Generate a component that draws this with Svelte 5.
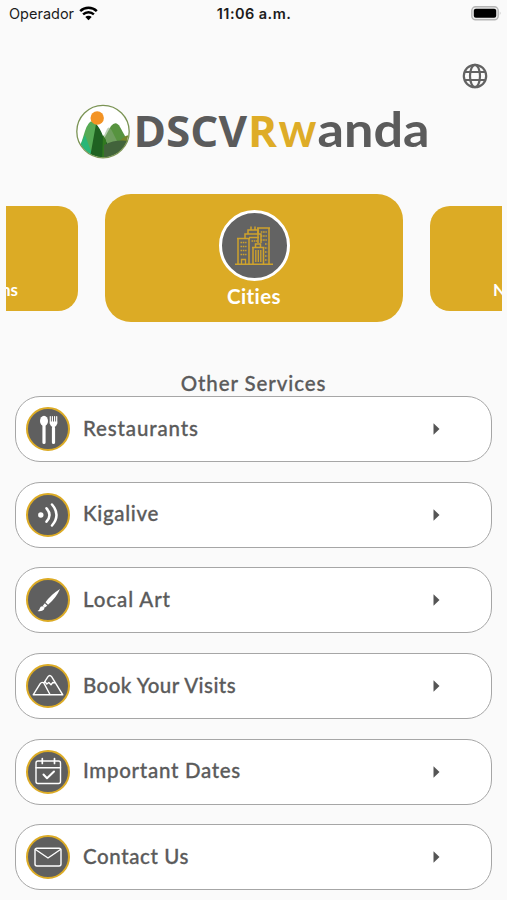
<script lang="ts">
	const services = [
		{ label: 'Restaurants', icon: 'cutlery', spacing: 0.85 },
		{ label: 'Kigalive', icon: 'live', spacing: 0.65 },
		{ label: 'Local Art', icon: 'brush', spacing: 0.9 },
		{ label: 'Book Your Visits', icon: 'mountain', spacing: 0.45 },
		{ label: 'Important Dates', icon: 'calendar', spacing: 0.7 },
		{ label: 'Contact Us', icon: 'mail', spacing: 0.6 }
	];
</script>

<div class="screen">
	<header class="status-bar">
		<div class="carrier">
			<span>Operador</span>
			<svg width="19" height="15" viewBox="0 0 19 15">
				<path d="M1.2 5.2a12 12 0 0 1 16.6 0" fill="none" stroke="#000" stroke-width="2.5" />
				<path d="M4.1 8.4a7.8 7.8 0 0 1 10.8 0" fill="none" stroke="#000" stroke-width="2.4" />
				<path d="M6.3 11a4.6 4.6 0 0 1 6.4 0l-3.2 3.3z" fill="#000" />
			</svg>
		</div>
		<span class="time">11:06 a.m.</span>
		<svg class="battery" width="31" height="15" viewBox="0 0 31 15">
			<rect x="0.8" y="0.8" width="26.4" height="13" rx="3.8" fill="#ececec" stroke="#b5b5b5" stroke-width="1.4" />
			<rect x="2.8" y="2.8" width="22.4" height="9" rx="2" fill="#000" />
			<path d="M28.8 5.2q1.8 2.1 0 4.4z" fill="#b5b5b5" />
		</svg>
	</header>

	<div class="toolbar">
		<button class="language" aria-label="Language">
			<svg width="26" height="26" viewBox="0 0 26 26" fill="none" stroke="#626262" stroke-width="2.2">
				<circle cx="13" cy="13" r="11.2" />
				<ellipse cx="13" cy="13" rx="5" ry="11.2" />
				<path d="M2.8 9h20.4M2.8 17h20.4" />
			</svg>
		</button>
	</div>

	<div class="brand">
		<svg width="356" height="60" viewBox="0 0 356 60">
			<defs>
				<clipPath id="badge"><circle cx="27" cy="29.6" r="25.6" /></clipPath>
			</defs>
			<circle cx="27" cy="29.6" r="26.2" fill="#fff" />
			<g clip-path="url(#badge)">
				<path d="M24 44L35 24q5-6 9 1l11 20v15H24z" fill="#57933f" />
				<path d="M38 46q14-20 22-9v21H35z" fill="#75862a" />
				<path d="M24 42L31 27q2-4 5 2l8 16v15H24z" fill="#83a878" opacity="0.55" />
				<path d="M0 58L9 29q6-17 13-4L31 60z" fill="#56aa55" />
				<path d="M0 52L9 33 19 60H0z" fill="#29b678" />
				<path d="M20 22q4 4 7 12l4 7v20H13z" fill="#1f6221" />
				<path d="M27 33l3 5v22h-4z" fill="#31791f" />
				<path d="M28 43q14-7 28-3v20H28z" fill="#42633b" />
			</g>
			<circle cx="21.2" cy="16" r="6.7" fill="#f39324" />
			<circle cx="27" cy="29.6" r="26.2" fill="none" stroke="#7b9455" stroke-width="1.3" />
			<text class="wordmark" x="57.5" y="44.9" fill="#5b5b5b" textLength="113.5" lengthAdjust="spacingAndGlyphs">DSCV</text>
			<text class="wordmark" x="172" y="44.9" fill="#deac27" textLength="29" lengthAdjust="spacingAndGlyphs">R</text>
			<text class="soft" x="202.5" y="44.7" fill="#deac27" textLength="38" lengthAdjust="spacingAndGlyphs">w</text>
			<text class="soft" x="241.5" y="44.7" fill="#5b5b5b" textLength="112" lengthAdjust="spacingAndGlyphs">anda</text>
		</svg>
	</div>

	<div class="carousel">
		<div class="card side left"><span>ns</span></div>
		<div class="card main">
			<div class="card-icon">
				<svg width="38" height="41" viewBox="0 0 38 41" fill="none" stroke="#cfa32c" stroke-width="1.5">
					<path d="M0 39.3h38M3 39V13.5h11V39M2 13.5h13M10 13V9h3V5h3V1.5M20 1.5V5h3v4h3v9M13 5h10M10 9h14M14 12.5h10" />
					<path d="M23 18V3h11v36M22 3h13M18 39V22.5h10.5V39M17 22.5h12.5M20.5 22V19h5v3" />
					<path d="M5.5 17.5h6M5.5 21.5h6M5.5 25.5h6M5.5 29.5h6M16.5 16h6" stroke-dasharray="1.6 0.7" />
					<path d="M25.8 7h6M25.8 11h6M25.8 15h6M30 19h2.5M30 23h2.5M30 27h2.5M30 31h2.5M30 35h2.5" stroke-dasharray="1.6 0.7" />
					<path d="M20.8 25v12M23.3 25v12M25.8 25v12M6.5 39v-4.5h4V39" stroke-width="1.3" />
				</svg>
			</div>
			<span>Cities</span>
		</div>
		<div class="card side right"><span>N</span></div>
	</div>

	<h2>Other Services</h2>

	<div class="services">
		{#each services as service}
			<button class="service">
				<span class="service-icon">
					<svg width="40" height="40" viewBox="0 0 40 40" fill="none" stroke="#fff" stroke-width="1.4" stroke-linecap="round" stroke-linejoin="round">
						{#if service.icon === 'cutlery'}
							<ellipse cx="16" cy="11.9" rx="4" ry="5.2" fill="#fff" stroke="none" />
							<path d="M16 17v16.5M25.5 19v14.5" stroke-width="3.2" />
							<path d="M16 16v6M25.5 17v6" stroke-width="1.8" />
							<path d="M22.3 7.5v7M24.4 7.5v7M26.6 7.5v7M28.7 7.5v7" stroke-width="1.2" />
							<path d="M21.8 12.5h7.400q0 4.500-2.700 5.500h-2q-2.700-1-2.700-5.500z" fill="#fff" stroke="none" />
						{:else if service.icon === 'live'}
							<circle cx="12.8" cy="20" r="2.7" fill="#fff" stroke="none" />
							<path d="M18.5 13.3q6 6.700 0 13.400M24 9.500q9 10.500 0 21" stroke-width="2.5" />
						{:else if service.icon === 'brush'}
							<path d="M32 9Q28.500 17.500 20 24.800l-2.500-2.500Q23 14.500 32 9z" fill="#fff" stroke="none" />
							<path d="M16.800 23.200l2.500 2.500-2.800 2-1.800-1.800z" fill="#fff" stroke="none" />
							<path d="M14.300 26.300q3 .7 1.700 3.200-2 2.300-6.500 1.500 2-.8 2.300-2.800.6-2 2.500-1.900z" fill="#fff" stroke="none" />
						{:else if service.icon === 'mountain'}
							<path d="M21 28.800H5.200L12.200 17.700q2-2.700 4 0l5.800 10.800M15.800 17.200L20 10.700q1.800-2.500 3.600 0L34.800 28.800H21" />
							<path d="M17 15.800l1.800 2.200 2-1.500 2.200 2.200 1.800-2.200 1.700.3" />
						{:else if service.icon === 'calendar'}
							<rect x="8" y="9" width="24.500" height="22.500" rx="2" />
							<path d="M8 15.800h24.500" />
							<path d="M14.300 6.500v5M26.500 6.500v5" stroke-width="1.700" />
							<path d="M15.500 22.500l3.500 3.800 7-6.800" stroke-width="2" />
						{:else}
							<rect x="7" y="11.300" width="26" height="17.700" rx="2" />
							<path d="M7.500 12.500L20 21l12.500-8.500" />
						{/if}
					</svg>
				</span>
				<span class="label" style="letter-spacing: {service.spacing}px">{service.label}</span>
				<svg class="arrow" width="7" height="12" viewBox="0 0 7 12">
					<path d="M0.500 0.300L6.500 6 0.500 11.700z" fill="#555" />
				</svg>
			</button>
		{/each}
	</div>
</div>

<style>
	:global(body) {
		margin: 0;
		background: #fafafa;
	}

	.screen {
		width: 507px;
		height: 900px;
		overflow: hidden;
		background: #fafafa;
		font-family: 'Lato', sans-serif;
		color: #5b5b5b;
	}

	.status-bar {
		display: grid;
		grid-template-columns: 1fr auto 1fr;
		align-items: center;
		height: 27px;
		padding: 0 5px 0 9px;
		box-sizing: border-box;
		font-family: 'Inter', sans-serif;
		font-size: 14.5px;
		color: #1c1c1c;
	}

	.carrier {
		display: flex;
		align-items: center;
		gap: 5px;
	}

	.time {
		margin-right: 3px;
		font-weight: 600;
		letter-spacing: 0.45px;
	}

	.battery {
		justify-self: end;
	}

	.toolbar {
		display: flex;
		justify-content: flex-end;
		padding: 36px 19px 0 0;
	}

	.language {
		width: 26px;
		height: 26px;
		padding: 0;
		border: 0;
		background: none;
	}

	.brand {
		display: flex;
		padding: 13px 0 0 76px;
	}

	.wordmark {
		font-family: 'Open Sans', sans-serif;
		font-size: 43.5px;
		font-weight: 700;
	}

	.soft {
		font-family: 'Lato', sans-serif;
		font-size: 48px;
		font-weight: 700;
	}

	.carousel {
		display: flex;
		align-items: center;
		justify-content: space-between;
		height: 128px;
		margin: 32px 5px 0 6px;
	}

	.card {
		box-sizing: border-box;
		display: flex;
		background: #dcab25;
		color: #fff;
		font-weight: 700;
	}

	.side {
		width: 72px;
		height: 105px;
		align-items: flex-end;
		overflow: hidden;
		padding-bottom: 11px;
		font-size: 17px;
	}

	.left {
		border-radius: 0 20px 20px 0;
	}

	.left span {
		margin-left: -5px;
	}

	.right {
		border-radius: 20px 0 0 20px;
		padding-left: 63px;
	}

	.main {
		width: 298px;
		height: 128px;
		flex-direction: column;
		align-items: center;
		border-radius: 26px;
		padding-top: 16px;
		font-size: 20.5px;
		letter-spacing: 0.4px;
		line-height: 31px;
	}

	.card-icon {
		box-sizing: border-box;
		width: 71px;
		height: 71px;
		display: flex;
		align-items: center;
		justify-content: center;
		border: 3px solid #fff;
		border-radius: 50%;
		background: #636363;
	}

	h2 {
		margin: 49px 0 0;
		text-align: center;
		font-size: 20.5px;
		font-weight: 500;
		line-height: 25px;
		letter-spacing: 0.9px;
		-webkit-text-stroke: 0.3px #5b5b5b;
	}

	.services {
		display: flex;
		flex-direction: column;
		gap: 19.7px;
		padding: 0 15px;
	}

	.service {
		box-sizing: border-box;
		display: flex;
		align-items: center;
		height: 66px;
		padding: 0 51px 0 10px;
		border: 1.5px solid #a6a6a6;
		border-radius: 25px;
		background: #fff;
		color: inherit;
		font-family: inherit;
		text-align: left;
	}

	.service-icon {
		box-sizing: border-box;
		display: flex;
		width: 44px;
		height: 44px;
		border: 2px solid #dcab25;
		border-radius: 50%;
		background: #5f5f5f;
	}

	.label {
		flex: 1;
		margin-left: 13px;
		padding-bottom: 3px;
		font-size: 20.5px;
		font-weight: 500;
		-webkit-text-stroke: 0.3px #5b5b5b;
	}
</style>
